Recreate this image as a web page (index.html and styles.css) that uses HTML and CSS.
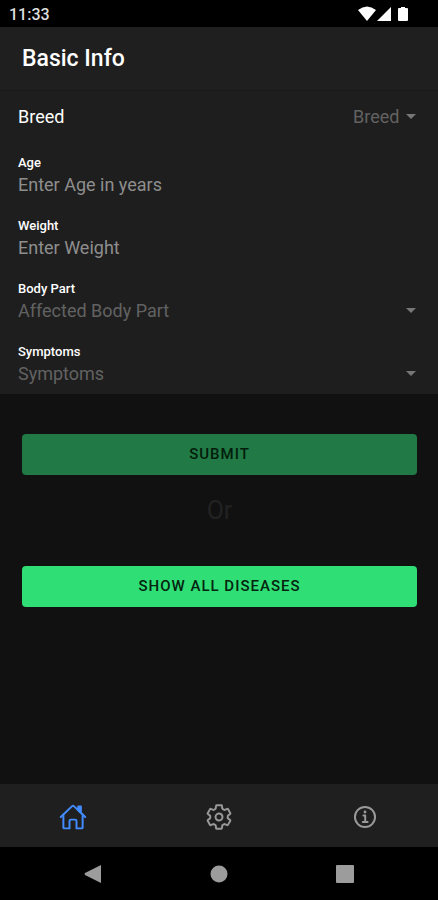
FILE: index.html
```html
<!DOCTYPE html>
<html lang="en">
<head>
<meta charset="utf-8">
<meta name="viewport" content="width=device-width, initial-scale=1">
<title>Basic Info</title>
<link rel="stylesheet" href="styles.css">
</head>
<body>
<div class="status">
  <time>11:33</time>
  <svg class="status-icons" viewBox="0 0 52 16" aria-hidden="true">
    <path d="M0 4Q9-3 18 4L9 15Z"/>
    <path d="M33 1V15H19Z"/>
    <path d="M43 1h4v1h2q1 0 1 1v11q0 1-1 1h-8q-1 0-1-1V3q0-1 1-1h2z"/>
  </svg>
</div>
<header class="header"><h1>Basic Info</h1></header>
<main class="content">
  <form id="info" class="list">
    <div class="row">
      <label class="row-label" for="breed">Breed</label>
      <div class="picker">
        <select id="breed"><option>Breed</option></select>
      </div>
    </div>
    <div class="field">
      <label for="age">Age</label>
      <input id="age" type="text" placeholder="Enter Age in years">
    </div>
    <div class="field">
      <label for="weight">Weight</label>
      <input id="weight" type="text" placeholder="Enter Weight">
    </div>
    <div class="field">
      <label for="part">Body Part</label>
      <div class="picker"><select id="part"><option>Affected Body Part</option></select></div>
    </div>
    <div class="field">
      <label for="symptoms">Symptoms</label>
      <div class="picker"><select id="symptoms"><option>Symptoms</option></select></div>
    </div>
  </form>
  <div class="actions">
    <button class="button" type="submit" form="info" disabled>SUBMIT</button>
    <p class="or">Or</p>
    <button class="button" type="button">SHOW ALL DISEASES</button>
  </div>
</main>
<nav class="tabs">
  <a class="tab active" href="#home" aria-label="Home">
    <svg viewBox="0 0 512 512"><path d="M80 212v236a16 16 0 0016 16h96V328a24 24 0 0124-24h80a24 24 0 0124 24v136h96a16 16 0 0016-16V212"/><path d="M480 256L266.89 52c-5-5.28-16.69-5.34-21.78 0L32 256"/><path class="chimney" d="M400 179V64h-48v69z"/></svg>
  </a>
  <a class="tab" href="#settings" aria-label="Settings">
    <svg viewBox="0 0 512 512"><path d="M262.29 192.31a64 64 0 1057.4 57.4 64.13 64.13 0 00-57.4-57.4zM416.39 256a154.34 154.34 0 01-1.53 20.79l45.21 35.46a10.81 10.81 0 012.45 13.75l-42.77 74a10.81 10.81 0 01-13.14 4.59l-44.9-18.08a16.11 16.11 0 00-15.17 1.75A164.48 164.48 0 01325 400.8a15.94 15.94 0 00-8.82 12.14l-6.73 47.89a11.08 11.08 0 01-10.68 9.17h-85.54a11.11 11.11 0 01-10.69-8.87l-6.72-47.82a16.07 16.07 0 00-9-12.22 155.3 155.3 0 01-21.46-12.57 16 16 0 00-15.11-1.71l-44.89 18.07a10.81 10.81 0 01-13.14-4.58l-42.77-74a10.8 10.8 0 012.45-13.75l38.21-30a16.05 16.05 0 006-14.08c-.36-4.17-.58-8.33-.58-12.5s.21-8.27.58-12.35a16 16 0 00-6.07-13.94l-38.19-30A10.81 10.81 0 0149.48 186l42.77-74a10.81 10.81 0 0113.14-4.59l44.9 18.08a16.11 16.11 0 0015.17-1.75A164.48 164.48 0 01187 111.2a15.94 15.94 0 008.82-12.14l6.73-47.89A11.08 11.08 0 01213.23 42h85.54a11.11 11.11 0 0110.69 8.87l6.72 47.82a16.07 16.07 0 009 12.22 155.3 155.3 0 0121.46 12.57 16 16 0 0015.11 1.71l44.89-18.07a10.81 10.81 0 0113.14 4.58l42.77 74a10.8 10.8 0 01-2.45 13.75l-38.21 30a16.05 16.05 0 00-6.05 14.08c.33 4.14.55 8.3.55 12.47z"/></svg>
  </a>
  <a class="tab" href="#about" aria-label="About">
    <svg viewBox="0 0 512 512"><circle cx="256" cy="256" r="184"/><path d="M228 228h32v116M216 348h88"/><circle class="dot" cx="256" cy="164" r="26"/></svg>
  </a>
</nav>
<div class="system">
  <button type="button" aria-label="Back"><svg viewBox="0 0 18 18"><path d="M17 0V18L1 10Q0 9 1 8Z"/></svg></button>
  <button type="button" aria-label="Home screen"><svg viewBox="0 0 18 18"><circle cx="9" cy="9" r="8.5"/></svg></button>
  <button type="button" aria-label="Recent apps"><svg viewBox="0 0 18 18"><rect width="18" height="18" rx="1"/></svg></button>
</div>
</body>
</html>
```

FILE: styles.css
```css
* {
  box-sizing: border-box;
}

body {
  margin: 0;
  min-height: 100vh;
  display: flex;
  flex-direction: column;
  background: #111;
  color: #fff;
  font-family: Roboto, sans-serif;
  font-size: 18px;
}

button,
input,
select {
  margin: 0;
  padding: 0;
  border: 0;
  background: none;
  font: inherit;
}

.status {
  display: flex;
  align-items: center;
  justify-content: space-between;
  height: 27px;
  padding: 1px 28px 0 9px;
  background: #000;
  color: #ddd;
  font-size: 16px;
  font-weight: 500;
}

.status-icons {
  width: 52px;
  height: 16px;
  fill: #fff;
}

.header {
  display: flex;
  align-items: center;
  height: 64px;
  padding: 0 22px;
  background: #1f1f1f;
  border-bottom: 1px solid #191919;
}

h1 {
  margin: 0;
  font-size: 23px;
  font-weight: 500;
}

.content {
  flex: 1;
}

.list {
  background: #1e1e1e;
}

.row {
  display: flex;
  align-items: center;
  justify-content: space-between;
  height: 51px;
  padding: 0 22px 0 18px;
}

.field {
  height: 63px;
  padding: 12px 22px 0 18px;
}

.field label {
  display: block;
  font-size: 13px;
  font-weight: 500;
  line-height: 17px;
}

.field input,
.picker select {
  display: block;
  width: 100%;
  height: 26px;
  color: #8e8e8e;
}

.field input::placeholder {
  color: #8e8e8e;
  opacity: 1;
}

.picker {
  display: grid;
  align-items: center;
}

.picker select {
  grid-area: 1 / 1;
  appearance: none;
  padding-right: 16px;
  color: #626262;
}

.picker::after {
  content: "";
  grid-area: 1 / 1;
  justify-self: end;
  border: solid transparent;
  border-width: 5px 5px 0;
  border-top-color: #777;
  pointer-events: none;
}

.actions {
  padding: 40px 21px 0 22px;
}

.button {
  display: block;
  width: 100%;
  height: 41px;
  padding-bottom: 2px;
  border-radius: 4px;
  background: #2fdf75;
  color: #04240f;
  font-size: 15px;
  font-weight: 500;
  letter-spacing: 1px;
}

.button:disabled {
  background: #217a45;
  color: #031c0b;
}

.or {
  margin: 20px 0 40px;
  color: #222;
  font-size: 25px;
  line-height: 31px;
  text-align: center;
}

.tabs {
  display: grid;
  grid-template-columns: repeat(3, 1fr);
  height: 63px;
  padding-top: 2px;
  background: #1f1f1f;
}

.tab {
  display: grid;
  place-items: center;
  color: #999;
}

.tab svg {
  width: 28px;
  height: 28px;
  fill: none;
  stroke: currentColor;
  stroke-width: 36;
  stroke-linecap: round;
  stroke-linejoin: round;
}

.tab .dot {
  fill: currentColor;
  stroke: none;
}

.tab .chimney {
  fill: currentColor;
}

.active {
  color: #428cff;
}

.system {
  display: flex;
  justify-content: center;
  gap: 90px;
  height: 53px;
  background: #000;
}

.system button {
  width: 36px;
}

.system svg {
  display: block;
  width: 18px;
  height: 18px;
  margin: 0 auto;
  fill: #9c9c9c;
}
```
